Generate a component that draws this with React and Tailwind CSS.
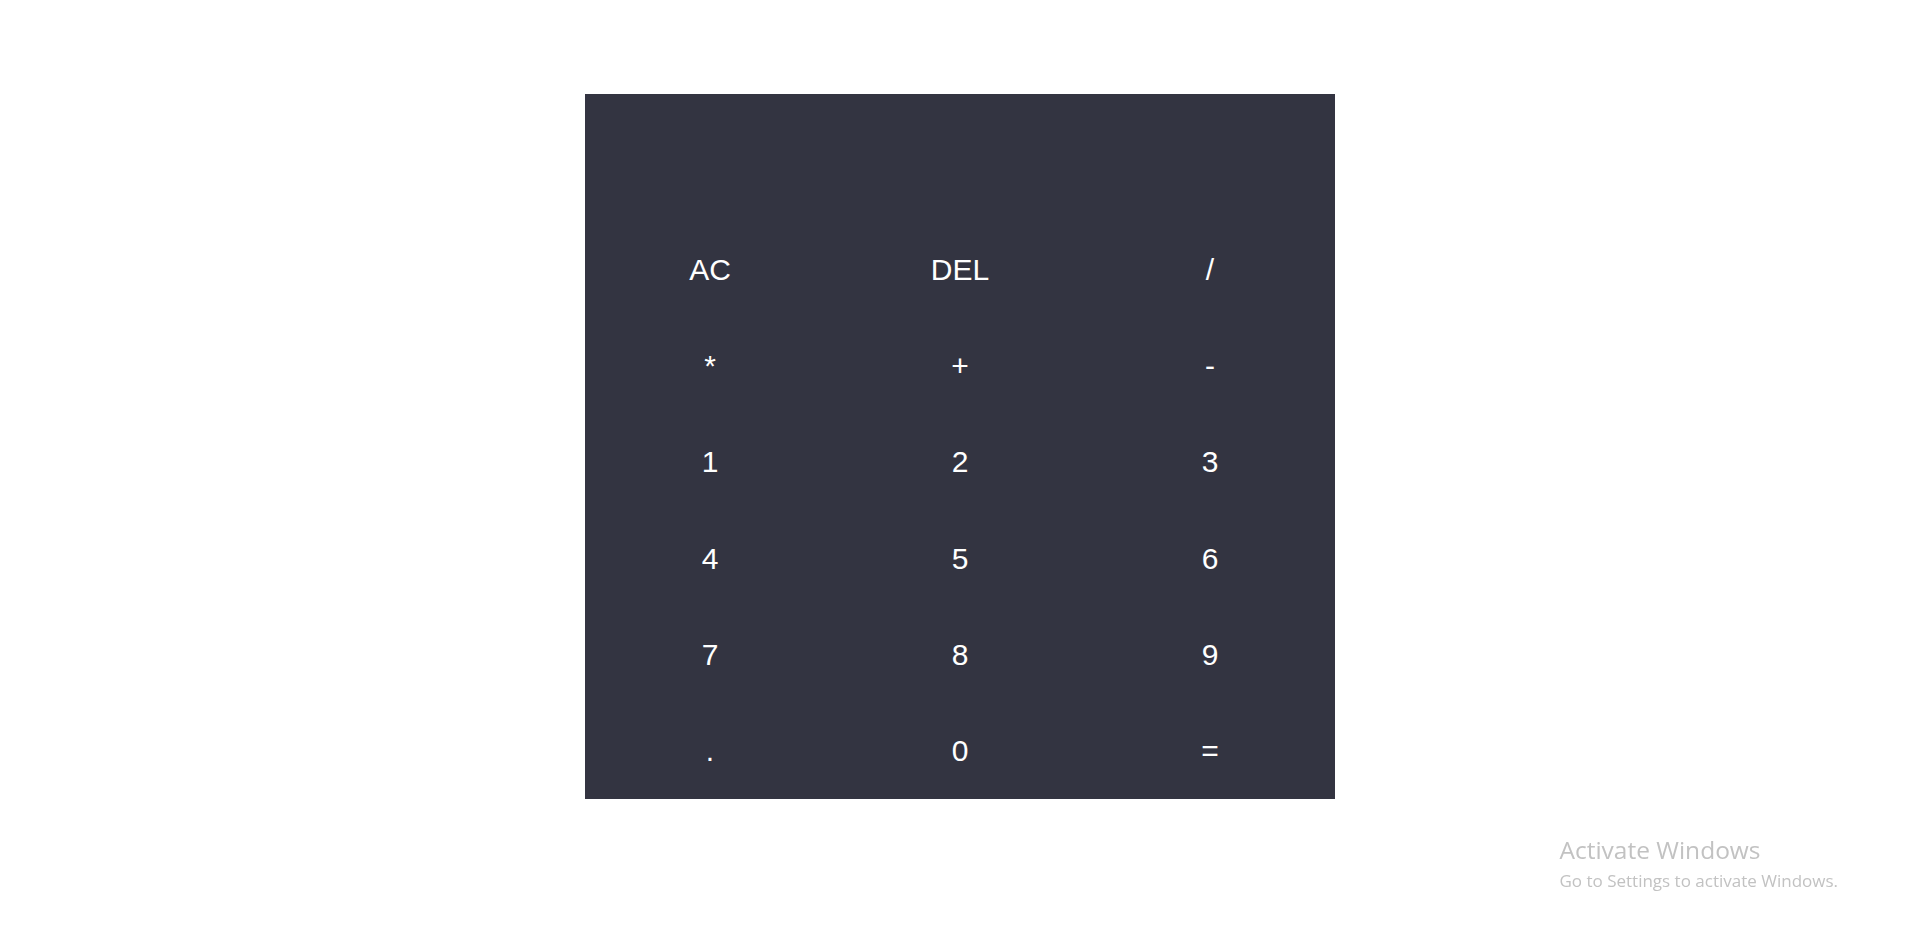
import React, { useState } from "react";

const KEYS = ["AC", "DEL", "/", "*", "+", "-", "1", "2", "3", "4", "5", "6", "7", "8", "9", ".", "0", "="];

export default function App() {
  const [value, setValue] = useState("");

  const press = (k) => {
    if (k === "AC") return setValue("");
    if (k === "DEL") return setValue((v) => v.slice(0, -1));
    if (k === "=") {
      try {
        // eslint-disable-next-line no-new-func
        setValue(String(Function(`return (${value})`)()));
      } catch {
        setValue("");
      }
      return;
    }
    setValue((v) => v + k);
  };

  return (
    <div className="min-h-screen bg-white flex justify-center pt-[94px] font-['Liberation_Sans',Arial,sans-serif]">
      <div className="w-[750px] h-[705px] bg-[#333441] grid grid-cols-3 grid-rows-[127px_repeat(6,1fr)]">
        <div className="col-span-3 flex items-end justify-end px-6 pb-2 text-white text-4xl break-all">
          {value}
        </div>
        {KEYS.map((k) => (
          <button
            key={k}
            onClick={() => press(k)}
            className="flex items-center justify-center pt-[1px] bg-transparent text-white text-[30px] leading-none cursor-pointer focus:outline-none"
          >
            {k}
          </button>
        ))}
      </div>

      <div className="fixed right-[82px] bottom-[47px] text-[#c2c2c2] font-['Open_Sans',sans-serif] pointer-events-none">
        <div className="text-[24.5px] leading-tight">Activate Windows</div>
        <div className="text-[17px] leading-tight mt-[4px]">Go to Settings to activate Windows.</div>
      </div>
    </div>
  );
}
